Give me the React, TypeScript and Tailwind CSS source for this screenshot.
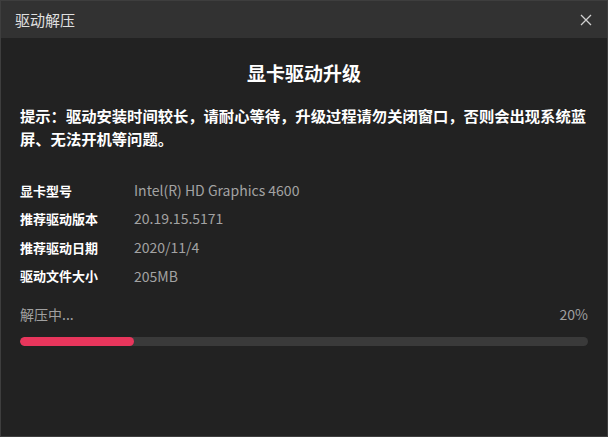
import React from "react";

const rows: [string, string][] = [
  ["显卡型号", "Intel(R) HD Graphics 4600"],
  ["推荐驱动版本", "20.19.15.5171"],
  ["推荐驱动日期", "2020/11/4"],
  ["驱动文件大小", "205MB"],
];

export default function App() {
  const pct = 20;
  return (
    <div
      className="w-[608px] h-[437px] bg-[#222222] border border-[#3e3e3e] flex flex-col overflow-hidden"
      style={{ fontFamily: '"Noto Sans CJK SC", "Noto Sans", sans-serif' }}
    >
      <div className="h-[37px] bg-[#323232] flex items-center justify-between pl-[14px] pr-[14px] shrink-0">
        <span className="text-[15px] text-[#e0e0e0] leading-none">驱动解压</span>
        <svg width="12" height="12" viewBox="0 0 12 12" className="mr-[1px]">
          <path d="M1 1L11 11M11 1L1 11" stroke="#d0d0d0" strokeWidth="1.3" />
        </svg>
      </div>
      <div className="flex flex-col px-[19px]">
        <div className="mt-[21px] h-[28px] leading-[28px] text-center text-[19px] font-bold text-white">
          显卡驱动升级
        </div>
        <div className="mt-[17px] text-[15.3px] leading-[23px] font-bold text-white whitespace-nowrap">
          提示：驱动安装时间较长，请耐心等待，升级过程请勿关闭窗口，否则会出现系统蓝
          <br />
          屏、无法开机等问题。
        </div>
        <div className="mt-[26px] flex flex-col">
          {rows.map(([k, v]) => (
            <div key={k} className="h-[28.6px] flex items-center">
              <span className="w-[114px] text-[13px] font-bold text-white">{k}</span>
              <span className="text-[14px] text-[#a3a3a3]">{v}</span>
            </div>
          ))}
        </div>
        <div className="mt-[14px] h-[20px] flex items-center justify-between text-[14px] text-[#a0a0a0]">
          <span>解压中...</span>
          <span>{pct}%</span>
        </div>
        <div className="mt-[13px] h-[9px] rounded-full bg-[#3a3a3a] overflow-hidden">
          <div className="h-full rounded-full bg-[#e8365c]" style={{ width: `${pct}%` }} />
        </div>
      </div>
    </div>
  );
}
